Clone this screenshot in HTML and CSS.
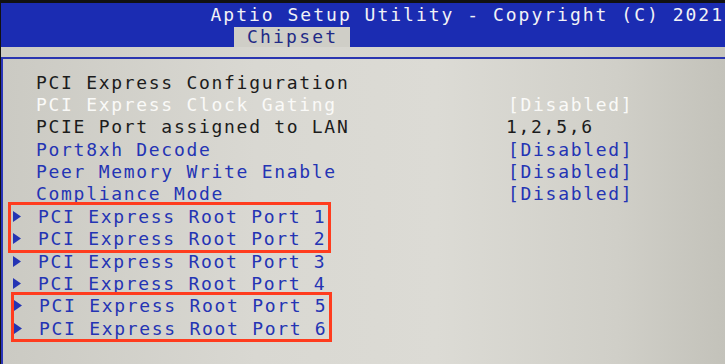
FILE: index.html
```html
<!DOCTYPE html>
<html lang="en">
<head>
    <meta charset="UTF-8">
    <title>Aptio Setup Utility - Chipset</title>
    <link rel="stylesheet" href="styles.css">
</head>
<body>
    <div class="screen">
        <div class="header">
            <div class="title">Aptio Setup Utility - Copyright (C) 2021</div>
            <div class="tabs">
                <div class="tab active">Chipset</div>
            </div>
        </div>
        <div class="strip"></div>

        <div class="frame">
            <div class="row"><span class="label">PCI Express Configuration</span></div>
            <div class="row selected">
                <span class="label">PCI Express Clock Gating</span>
                <span class="value">[Disabled]</span>
            </div>
            <div class="row">
                <span class="label">PCIE Port assigned to LAN</span>
                <span class="value info">1,2,5,6</span>
            </div>
            <div class="row option">
                <span class="label">Port8xh Decode</span>
                <span class="value">[Disabled]</span>
            </div>
            <div class="row option">
                <span class="label">Peer Memory Write Enable</span>
                <span class="value">[Disabled]</span>
            </div>
            <div class="row option">
                <span class="label">Compliance Mode</span>
                <span class="value">[Disabled]</span>
            </div>

            <!-- marked ports -->
            <div class="group first">
                <div class="row sub"><svg class="arrow" width="8" height="11" viewBox="0 0 8 11"><polygon points="0,0 8,5.5 0,11"/></svg><span class="label">PCI Express Root Port 1</span></div>
                <div class="row sub"><svg class="arrow" width="8" height="11" viewBox="0 0 8 11"><polygon points="0,0 8,5.5 0,11"/></svg><span class="label">PCI Express Root Port 2</span></div>
            </div>
            <div class="row sub loose"><svg class="arrow" width="8" height="11" viewBox="0 0 8 11"><polygon points="0,0 8,5.5 0,11"/></svg><span class="label">PCI Express Root Port 3</span></div>
            <div class="row sub loose"><svg class="arrow" width="8" height="11" viewBox="0 0 8 11"><polygon points="0,0 8,5.5 0,11"/></svg><span class="label">PCI Express Root Port 4</span></div>
            <div class="group second">
                <div class="row sub"><svg class="arrow" width="8" height="11" viewBox="0 0 8 11"><polygon points="0,0 8,5.5 0,11"/></svg><span class="label">PCI Express Root Port 5</span></div>
                <div class="row sub"><svg class="arrow" width="8" height="11" viewBox="0 0 8 11"><polygon points="0,0 8,5.5 0,11"/></svg><span class="label">PCI Express Root Port 6</span></div>
            </div>
        </div>
    </div>
</body>
</html>
```

FILE: styles.css
```css
body {
    margin: 0;
    padding: 0;
    background-color: #111;
    font-family: "DejaVu Sans Mono", "Liberation Mono", monospace;
    font-size: 18px;
    letter-spacing: 1.7px;
    overflow: hidden;
}
.screen {
    width: 725px;
    height: 364px;
    display: flex;
    flex-direction: column;
    padding-left: 1px;
    box-sizing: border-box;
}

/* Blue title bar */
.header {
    margin-top: 3px;
    height: 44px;
    background-color: #1b2cb2;
    display: flex;
    flex-direction: column;
}
.title {
    color: #f2f2f6;
    text-align: right;
    letter-spacing: 2px;
    line-height: 20px;
    padding-top: 2px;
    padding-right: 1px;
    white-space: nowrap;
}
.tabs {
    display: flex;
    margin-top: 2px;
    padding-left: 233px;
}
.tab {
    width: 116px;
    height: 20px;
    background-color: #cfcec7;
    color: #1f2a86;
    letter-spacing: 2.2px;
    text-indent: 13px;
    line-height: 20px;
}
.strip {
    height: 10px;
    background: linear-gradient(to right, #cccbc4, #d8d7d1 40%, #d2d1ca 80%, #c6c5bd);
    border-bottom: 2px solid #2a35b0;
}

/* Main panel */
.frame {
    flex: 1;
    padding-top: 12px;
    border-left: 2px solid #2a35b8;
    background: linear-gradient(to right, #cbcac3, #d9d8d2 35%, #dcdbd5 60%, #d0cfc8 85%, #c3c2ba);
}
.row {
    display: flex;
    align-items: center;
    height: 22.36px;
    color: #1c1c1c;
    white-space: nowrap;
}
.row .label {
    width: 472px;
    padding-left: 33px;
}
.row.selected {
    color: #fafaf8;
}
.row.option {
    color: #2434b4;
}
.value.info {
    margin-left: -2px;
}

/* Submenu rows */
.row.sub {
    color: #2434b4;
    padding-left: 2px;
}
.row.sub.loose {
    padding-left: 10px;
}
.row.sub .label {
    width: auto;
    padding-left: 17px;
}
.arrow {
    fill: #2434b4;
    flex-shrink: 0;
}
.group {
    width: 317px;
    outline: 3px solid #ff3c1e;
    outline-offset: 0;
}
.group.first {
    margin-left: 8px;
}
.group.second {
    margin-left: 11px;
    width: 315px;
}
.group.second .row.sub {
    padding-left: 0;
}
```
